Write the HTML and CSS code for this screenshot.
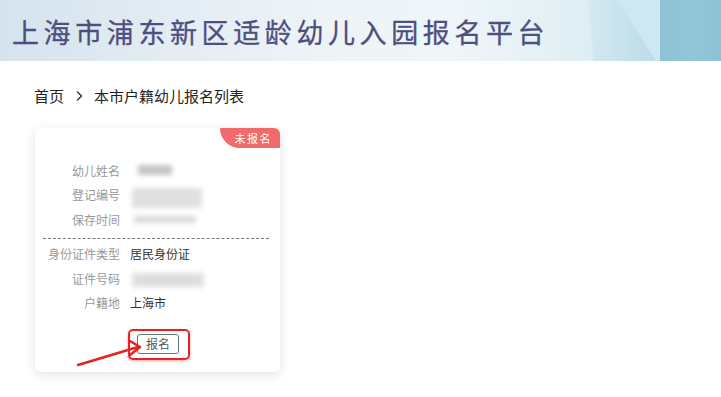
FILE: index.html
```html
<!DOCTYPE html>
<html lang="zh">
<head>
<meta charset="utf-8">
<link rel="stylesheet" href="styles.css">
</head>
<body>
<header class="banner">
  <div class="shape shape-a"></div>
  <div class="shape shape-c"></div>
  <div class="shape shape-b"></div>
  <h1 class="title">上海市浦东新区适龄幼儿入园报名平台</h1>
</header>
<nav class="crumbs">
  <span>首页</span>
  <svg class="chev" width="8" height="12" viewBox="0 0 8 12"><path d="M2 1.5 L6.5 6 L2 10.5" fill="none" stroke="#333" stroke-width="1.4"/></svg>
  <span>本市户籍幼儿报名列表</span>
</nav>
<main class="list">
  <section class="card">
    <div class="badge">未报名</div>
    <div class="rows">
      <div class="row"><span class="label">幼儿姓名</span><span class="blur blur-name"></span></div>
      <div class="row"><span class="label">登记编号</span><span class="blur blur-reg"></span></div>
      <div class="row"><span class="label">保存时间</span><span class="blur blur-time"></span></div>
    </div>
    <div class="divider"></div>
    <div class="rows">
      <div class="row"><span class="label">身份证件类型</span><span class="value">居民身份证</span></div>
      <div class="row"><span class="label">证件号码</span><span class="blur blur-id"></span></div>
      <div class="row"><span class="label">户籍地</span><span class="value">上海市</span></div>
    </div>
    <div class="actions">
      <div class="highlight"><button class="btn">报名</button></div>
    </div>
    <svg class="arrow" width="80" height="45" viewBox="0 0 80 45">
      <path d="M3 37 L63 19" stroke="#e8231f" stroke-width="2.6" stroke-linecap="round" fill="none"/>
      <path d="M55 13 L65 19 L55 27" stroke="#e8231f" stroke-width="2.6" stroke-linecap="round" stroke-linejoin="round" fill="none"/>
    </svg>
  </section>
</main>
</body>
</html>
```
FILE: styles.css
```css
* { box-sizing: border-box; }
html, body { margin: 0; padding: 0; background: #fff; }
body {
  width: 721px;
  height: 397px;
  overflow: hidden;
  font-family: "Noto Sans CJK SC", "Noto Sans", sans-serif;
  color: #333;
}
.banner {
  position: relative;
  height: 61px;
  overflow: hidden;
  background: linear-gradient(90deg, #d5e3ee 0%, #e1ebf2 20%, #edf4f8 45%, #eff6f9 62%, #e2f0f5 78%, #d4e9f1 88%, #c8e3ed 100%);
  display: flex;
  align-items: center;
  padding-left: 12px;
}
.shape { position: absolute; top: 0; height: 61px; }
.shape-a {
  left: 588px; width: 72px;
  background: linear-gradient(90deg, rgba(205,230,239,0.6), rgba(185,219,231,0.9));
  clip-path: polygon(0 0, 40% 0, 95% 100%, 8% 100%);
}
.shape-c {
  left: 616px; width: 46px;
  background: #cfe7f0;
  clip-path: polygon(0 0, 100% 0, 100% 100%, 90% 100%);
}
.shape-b {
  left: 660px; width: 61px;
  background: linear-gradient(90deg, #8ec3d7, #92c7da 60%, #8cc2d6);
}
.title {
  position: relative;
  margin: 0;
  font-size: 27px;
  font-weight: 400;
  letter-spacing: 4.6px;
  color: #4d4f7f;
  line-height: 1;
  margin-top: 2px;
  -webkit-text-stroke: 0.3px #4d4f7f;
}
.crumbs {
  display: flex;
  align-items: flex-start;
  padding: 25px 0 0 34px;
  height: 67px;
  font-size: 15px;
  line-height: 20px;
  color: #222;
}
.chev { margin: 4px 11px 0 11px; }
.list { padding: 0 0 0 35px; }
.card {
  position: relative;
  width: 245px;
  height: 244px;
  background: #fff;
  border-radius: 6px;
  box-shadow: 0 3px 12px rgba(0,0,0,0.11);
  padding: 30px 0 0 13px;
}
.badge {
  position: absolute;
  top: 0; right: 0;
  width: 60px; height: 20px;
  background: #f16b6a;
  color: #fff;
  font-size: 11px;
  line-height: 20px;
  letter-spacing: 1.5px;
  text-align: right;
  padding-right: 8px;
  border-radius: 0 6px 0 20px;
}
.rows { display: flex; flex-direction: column; }
.row {
  display: flex;
  align-items: center;
  height: 24.5px;
  font-size: 12px;
}
.label {
  width: 72px;
  text-align: right;
  color: #999;
  margin-right: 10px;
  flex: none;
}
.value { color: #333; }
.blur { display: block; background: #c9c9c9; filter: blur(2.5px); }
.blur-name { width: 34px; height: 10px; margin-left: 8px; background: #c4c4c4; }
.blur-reg { width: 70px; height: 20px; margin-left: 2px; margin-top: 6px; background: #e0e0e0; }
.blur-time { width: 62px; height: 7px; margin-left: 4px; background: #d8d8d8; }
.blur-id { width: 72px; height: 14px; margin-left: 2px; margin-top: 4px; background: #dedede; }
.divider {
  width: 226px;
  margin: 6px 0 3px -5px;
  border-top: 1px dashed #777;
}
.actions {
  display: flex;
  justify-content: flex-start;
  padding: 14px 0 0 80px;
}
.highlight {
  padding: 3px 9px 4px 7px;
  border: 2.5px solid #e8231f;
  border-radius: 5px;
  box-shadow: 0 1px 3px rgba(200,0,0,0.35);
}
.btn {
  display: block;
  width: 42px;
  height: 20px;
  padding: 0;
  border: 1px solid #5d7a70;
  border-radius: 3px;
  background: #fff;
  color: #4a5e58;
  font-family: inherit;
  font-size: 12px;
  line-height: 18px;
}
.arrow { position: absolute; left: 40px; top: 200px; }
```
